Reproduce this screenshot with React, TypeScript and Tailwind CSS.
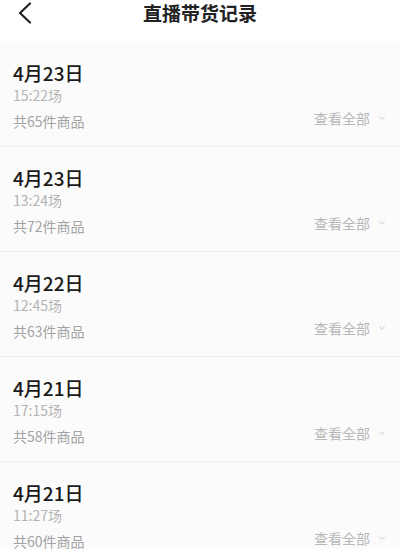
import { ChevronDown } from 'lucide-react';

const records = [
  { date: '4月23日', time: '15:22场', count: 65 },
  { date: '4月23日', time: '13:24场', count: 72 },
  { date: '4月22日', time: '12:45场', count: 63 },
  { date: '4月21日', time: '17:15场', count: 58 },
  { date: '4月21日', time: '11:27场', count: 60 },
];

export default function App() {
  return (
    <div
      className="w-[400px] h-[549px] overflow-hidden bg-white"
      style={{ fontFamily: '"Noto Sans CJK SC", "Noto Sans", sans-serif' }}
    >
      <header className="relative h-[42px] flex items-center justify-center">
        <svg
          className="absolute left-[17px] top-[2px]"
          width="16"
          height="22"
          viewBox="0 0 16 22"
          fill="none"
          stroke="#222"
          strokeWidth="2.2"
          strokeLinecap="round"
          strokeLinejoin="round"
        >
          <path d="M13 1.5 3 11l10 9.5" />
        </svg>
        <h1 className="text-[19px] font-bold text-[#222] leading-none -mt-[18px]">直播带货记录</h1>
      </header>

      <div className="flex flex-col">
        {records.map((r, i) => (
          <div
            key={i}
            className="h-[105px] shrink-0 bg-[#fbfbfb] border-b border-[#efefef] px-[13px] pt-[19px]"
          >
            <div className="text-[19px] leading-[24px] font-medium text-[#1a1a1a]">{r.date}</div>
            <div className="text-[14px] leading-[20px] text-[#b3b3b3]">{r.time}</div>
            <div className="mt-[3px] flex items-end justify-between">
              <span className="text-[14px] leading-[20px] text-[#a3a3a3]">共{r.count}件商品</span>
              <span className="flex items-center gap-[7px] pb-[3px] text-[14px] leading-[20px] text-[#b8b8b8]">
                查看全部
                <ChevronDown size={10} strokeWidth={1.8} className="text-[#bcbcbc]" />
              </span>
            </div>
          </div>
        ))}
      </div>
    </div>
  );
}
